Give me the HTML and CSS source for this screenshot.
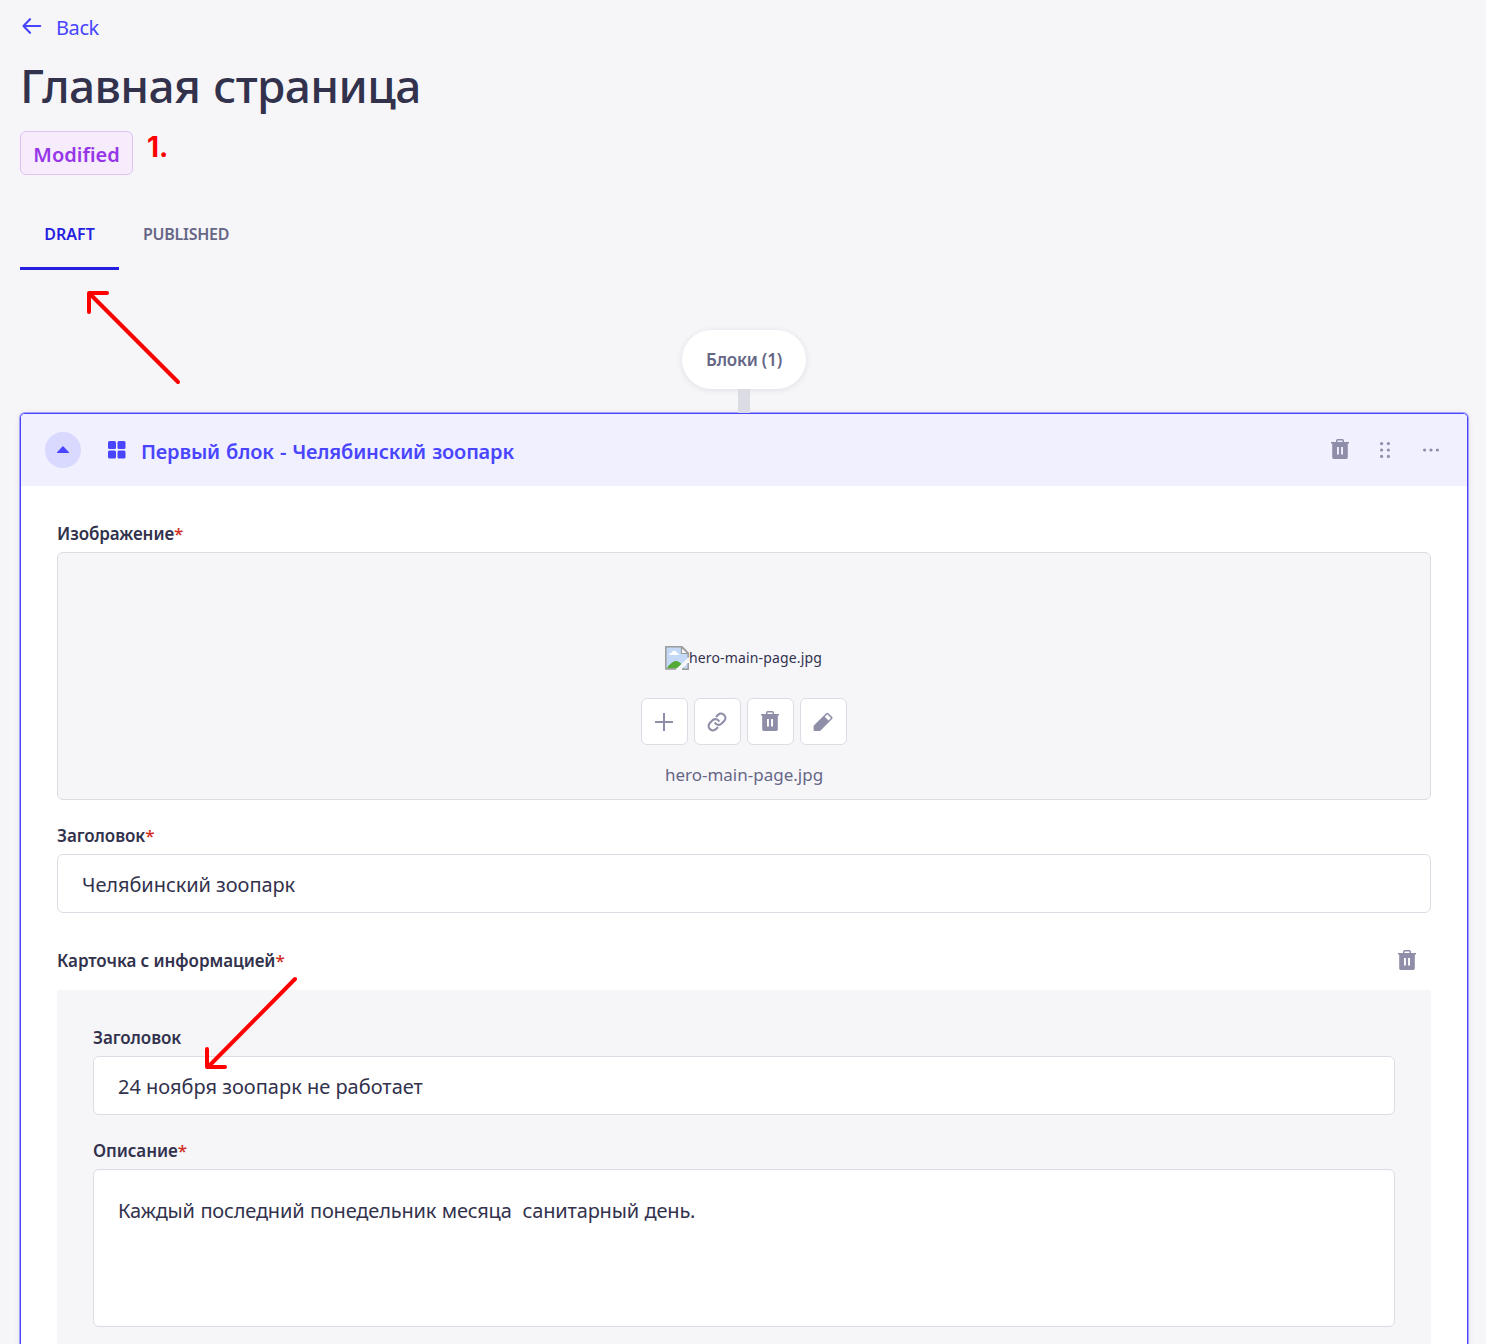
FILE: index.html
```html
<!DOCTYPE html>
<html lang="ru">
<head>
<meta charset="utf-8">
<title>Главная страница</title>
<link rel="stylesheet" href="styles.css">
</head>
<body>
<svg class="sprite" width="0" height="0" aria-hidden="true">
  <symbol id="trash" viewBox="0 0 18 20">
    <path fill-rule="evenodd" d="M5 3V1.6Q5 0 6.6 0h4.8Q13 0 13 1.6V3h5v1.500h-1.200V18.600Q16.800 20 15.400 20H2.600Q1.200 20 1.200 18.600V4.500H0V3zM6.500 3h5V1.500h-5zM6 8v7.600h1.900V8zM10.100 8v7.600H12V8z"/>
  </symbol>
</svg>
<main class="page">
  <a class="back">
    <svg width="20" height="16" viewBox="0 0 20 16" fill="none" stroke="currentColor" stroke-width="2.100" stroke-linecap="round" stroke-linejoin="round"><path d="M18.200 8H1.500M8 1.200L1.500 8l6.500 6.800"/></svg>
    <span class="t-back">Back</span>
  </a>
  <h1 class="title">Главная страница</h1>
  <div class="status"><span class="badge">Modified</span></div>
  <nav class="tabs">
    <a class="tab tab-active">DRAFT</a>
    <a class="tab">PUBLISHED</a>
  </nav>
  <div class="zone">
    <div class="pill">Блоки (1)</div>
    <div class="stem"></div>
  </div>
  <section class="card">
    <header class="card-head">
      <span class="toggle"><svg width="12" height="7" viewBox="0 0 12 7"><path d="M6 0l6 6.200v.8H0v-.8z" fill="currentColor"/></svg></span>
      <svg class="grid-icon" width="18" height="18" viewBox="0 0 18 18" fill="currentColor"><rect width="8" height="8" rx="1.500"/><rect x="9.500" width="8" height="8" rx="1.500"/><rect y="9.500" width="8" height="8" rx="1.500"/><rect x="9.500" y="9.500" width="8" height="8" rx="1.500"/></svg>
      <span class="card-title">Первый блок - Челябинский зоопарк</span>
      <span class="actions">
        <svg width="18" height="20"><use href="#trash"/></svg>
        <svg width="10" height="16" viewBox="0 0 10 16"><circle cx="1.600" cy="1.600" r="1.600"/><circle cx="8.400" cy="1.600" r="1.600"/><circle cx="1.600" cy="8" r="1.600"/><circle cx="8.400" cy="8" r="1.600"/><circle cx="1.600" cy="14.400" r="1.600"/><circle cx="8.400" cy="14.400" r="1.600"/></svg>
        <svg width="16" height="4" viewBox="0 0 16 4"><circle cx="1.600" cy="2" r="1.600"/><circle cx="8" cy="2" r="1.600"/><circle cx="14.400" cy="2" r="1.600"/></svg>
      </span>
    </header>
    <div class="card-body">
      <div class="label label-image">Изображение<i>*</i></div>
      <div class="media">
        <div class="preview">
          <svg width="24" height="24" viewBox="0 0 24 24">
            <path d="M1 1h16l6 6v16H1z" fill="#c3d9f7"/>
            <path d="M4 9q0-2 2.200-2 .8-2.500 3-2.500T12 7q2 0 2 2z" fill="#fff"/>
            <path d="M2 22.500q1-3 5-6 4-2.500 7-.5 4 2.500 5 6.500z" fill="#55aa35"/>
            <path d="M24 11v5l-8 8h-6z" fill="#f6f6f9"/>
            <path d="M11 23H.8V.8H17L23.200 7v4.500M23.200 17v6.200H17" fill="none" stroke="#9b9b9b" stroke-width="1.500"/>
            <path d="M16.500 1v6.500H23z" fill="#fff" stroke="#9b9b9b" stroke-width="1.200"/>
          </svg><span class="t-alt">hero-main-page.jpg</span>
        </div>
        <div class="tools">
          <span class="tool"><svg width="18" height="18" viewBox="0 0 18 18"><path d="M8 0h2v8h8v2h-8v8H8v-8H0V8h8z"/></svg></span>
          <span class="tool"><svg width="20" height="20" viewBox="0 0 24 24"><g fill="none" stroke="#8e8ea9" stroke-width="2.600"><path d="M9.300 12.500a5 5 0 0 0 8 1.600l3.300-3.300a5.200 5.200 0 0 0-7.300-7.400L10.800 5.900"/><path d="M14.700 11.500a5 5 0 0 0-8-1.600l-3.300 3.300a5.200 5.200 0 0 0 7.300 7.400l2.500-2.500"/></g></svg></span>
          <span class="tool tool-trash"><svg width="18" height="20"><use href="#trash"/></svg></span>
          <span class="tool"><svg width="20" height="20" viewBox="0 0 20 20"><path fill-rule="evenodd" d="M13.200 1.200q1.100-1.100 2.200 0l3.600 3.600q1.100 1.100 0 2.200L7 19H1.600Q.6 19 .6 18v-4.200zM11.700 4.700l3.800 3.800 2.500-2.600-3.700-3.700z"/></svg></span>
        </div>
        <div class="filename">hero-main-page.jpg</div>
      </div>
      <div class="label label-heading">Заголовок<i>*</i></div>
      <div class="input"><span class="value-heading">Челябинский зоопарк</span></div>
      <div class="label label-group"><span>Карточка с информацией<i>*</i></span><svg width="18" height="20"><use href="#trash"/></svg></div>
      <div class="panel">
        <div class="label label-first">Заголовок</div>
        <div class="input"><span>24 ноября зоопарк не работает</span></div>
        <div class="label label-desc">Описание<i>*</i></div>
        <div class="textarea"><span>Каждый последний понедельник месяца&nbsp; санитарный день.</span></div>
      </div>
    </div>
  </section>
</main>
<span class="note">1.</span>
<svg class="arrow arrow-tab" width="96" height="96" viewBox="0 0 96 96"><path d="M92 92L4 4M21 3H3v19"/></svg>
<svg class="arrow arrow-input" width="96" height="96" viewBox="0 0 96 96"><path d="M91 3L4 91M3 73v18h18"/></svg>
</body>
</html>
```
FILE: styles.css
```css
* { box-sizing: border-box; }
html { overflow: hidden; }
body {
  margin: 0;
  height: 1344px;
  overflow: hidden;
  position: relative;
  background: #f6f6f9;
  color: #32324d;
  font: 400 20px/28px "Noto Sans", "Open Sans", sans-serif;
}
svg { display: block; flex: none; }
span { white-space: nowrap; }
.sprite { position: absolute; }
.page { padding: 12px 18px 0 20px; }

.back { display: flex; align-items: center; gap: 14px; height: 30px; padding-left: 2px; color: #4945ff; }
.back svg { margin-top: -2px; }
.t-back { padding-top: 1px; letter-spacing: -.4px; }
.title { margin: 12px 0 0; height: 66px; font-size: 46px; line-height: 62px; font-weight: 500; letter-spacing: -.6px; word-spacing: 1.5px; white-space: nowrap; }
.status { display: flex; height: 44px; margin-top: 11px; }
.badge { display: flex; align-items: center; justify-content: center; width: 113px; border: 1px solid #e0c1f4; border-radius: 6px; background: #f6ecfc; color: #9736e8; font-weight: 600; padding-top: 4px; }
.tabs { display: flex; height: 71px; margin-top: 24px; font-size: 16px; font-weight: 600; letter-spacing: -.27px; }
.tab { display: flex; justify-content: center; padding: 21px 24px 0; color: #666687; }
.tab-active { width: 99px; color: #271fe0; border-bottom: 3px solid #271fe0; letter-spacing: 0; }

.zone { display: flex; flex-direction: column; align-items: center; margin-top: 60px; }
.pill { display: flex; align-items: center; justify-content: center; width: 124px; height: 59px; border-radius: 30px; background: #fff; color: #666687; font-size: 17px; font-weight: 600; letter-spacing: -.2px; box-shadow: 0 1px 6px rgba(33, 33, 52, .1); }
.stem { width: 12px; height: 24px; background: #dcdce4; }

.card { height: 960px; border: 1px solid #4945ff; border-radius: 5px; background: #fff; box-shadow: 0 0 0 1px rgba(73, 69, 255, .45), 0 1px 6px rgba(33, 33, 52, .1); }
.card-head { display: flex; align-items: center; height: 72px; padding: 0 28px 0 24px; background: #f0f0ff; border-radius: 4px 4px 0 0; color: #4945ff; }
.toggle { display: flex; align-items: center; justify-content: center; width: 36px; height: 36px; padding-bottom: 1px; border-radius: 50%; background: #d9d8ff; }
.grid-icon { margin-left: 27px; }
.card-title { margin-left: 15px; font-weight: 600; padding-top: 3px; letter-spacing: -.18px; word-spacing: 1.1px; }
.actions { display: flex; align-items: center; gap: 35px; margin-left: auto; }
.actions svg, .tool svg, .label svg { fill: #8e8ea9; }
.actions svg:first-child { margin-top: -2px; }
.actions svg:nth-child(2) { margin-left: -4px; }
.actions svg:nth-child(3) { margin-left: -2px; }
.card-body { padding: 0 36px; }

.label { display: flex; align-items: flex-end; font-size: 17px; line-height: 24px; font-weight: 600; letter-spacing: -.08px; }
.label i { color: #d02b20; font-style: normal; font-weight: 500; }
.label svg { margin-bottom: 3px; }
.label-image { height: 60px; margin-bottom: 6px; }
.label-heading { height: 48px; margin-bottom: 6px; }
.label-group { justify-content: space-between; height: 60px; margin-bottom: 17px; padding-right: 15px; }
.label-first { height: 24px; margin-bottom: 6px; }
.label-desc { height: 48px; margin-bottom: 6px; }

.media { display: flex; flex-direction: column; align-items: center; height: 248px; padding-top: 93px; border: 1px solid #dcdce4; border-radius: 6px; background: #f6f6f9; }
.preview { display: flex; height: 24px; margin-left: -1px; font-size: 14px; line-height: 23px; }
.t-alt { letter-spacing: .15px; }
.tools { display: flex; gap: 6px; margin-top: 28px; }
.tool { display: flex; align-items: center; justify-content: center; width: 47px; height: 47px; padding-right: 1px; border: 1px solid #dcdce4; border-radius: 6px; background: #fff; }
.tool-trash { padding-bottom: 1px; }
.filename { margin-top: 16px; color: #666687; font-size: 17px; line-height: 28px; }

.input { display: flex; align-items: center; height: 59px; padding: 2px 24px 0; border: 1px solid #dcdce4; border-radius: 6px; background: #fff; }
.value-heading { letter-spacing: -.07px; }
.textarea { height: 158px; padding: 27px 24px; border: 1px solid #dcdce4; border-radius: 6px; background: #fff; letter-spacing: -.18px; word-spacing: .5px; }
.panel { height: 400px; padding: 36px 36px 0; background: #f6f6f9; }

.note { position: absolute; left: 147px; top: 130px; color: #f00; font: 700 28px/34px Inter, sans-serif; }
.arrow { position: absolute; fill: none; stroke: #f00; stroke-width: 4; stroke-linecap: round; stroke-linejoin: round; }
.arrow-tab { left: 86px; top: 290px; }
.arrow-input { left: 204px; top: 976px; }
```
